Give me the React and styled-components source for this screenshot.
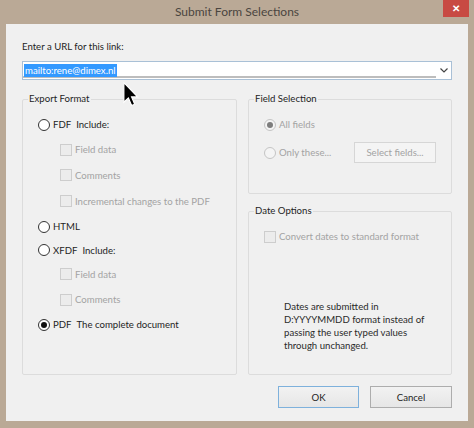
import React from "react";
import styled, { createGlobalStyle } from "styled-components";

const GlobalStyle = createGlobalStyle`
    html, body {
        margin: 0;
        padding: 0;
        box-sizing: border-box;
        background: #baa996;
    }
    *, *::before, *::after {
        box-sizing: border-box;
    }
`;

const Frame = styled.div`
    width: 474px;
    height: 428px;
    display: flex;
    flex-direction: column;
    background: #baa996;
    font-family: "Segoe UI", Lato, "Noto Sans", sans-serif;
    font-size: 9.6px;
    color: #1e1e1e;
    overflow: hidden;
`;

const TitleBar = styled.div`
    height: 24px;
    display: grid;
    grid-template-columns: 1fr auto 1fr;
    align-items: start;
`;

const Title = styled.div`
    grid-column: 2;
    font-size: 12px;
    line-height: 24px;
    color: #4a4540;
`;

const CloseButton = styled.div`
    grid-column: 3;
    justify-self: end;
    margin-right: 5px;
    width: 26px;
    height: 17px;
    background: #c84a43;
    color: #fff;
    font-size: 10px;
    font-weight: bold;
    line-height: 17px;
    text-align: center;
`;

const Client = styled.div`
    position: relative;
    flex: 1;
    margin: 0 6px 7px;
    background: #f0f0f0;
    padding: 15px 16px 0;
    display: flex;
    flex-direction: column;
`;

const UrlLabel = styled.div`
    line-height: 15px;
`;

const Combo = styled.div`
    margin-top: 7px;
    height: 19px;
    display: flex;
    align-items: stretch;
    background: #fff;
    border: 1px solid #a9c0d6;
`;

const ComboField = styled.div`
    flex: 1;
    padding: 2px 1px 0;
    border-bottom: 2px solid #bdbdbd;
    margin-bottom: 1px;
`;

const Selected = styled.span`
    display: inline-block;
    background: #3399ff;
    color: #fff;
    line-height: 13px;
    padding: 0 1px;
`;

const Chevron = styled.div`
    width: 15px;
    display: flex;
    align-items: center;
    justify-content: center;
`;

const Columns = styled.div`
    margin-top: 12px;
    height: 283px;
    display: grid;
    grid-template-columns: 215px minmax(0, 1fr);
    gap: 11px;
`;

const RightColumn = styled.div`
    display: flex;
    flex-direction: column;
    gap: 10px;
    min-width: 0;
`;

const Group = styled.fieldset`
    margin: 0;
    padding: 6px 0 0 15px;
    border: 1px solid #dcdcdc;
    border-radius: 2px;
    min-width: 0;
    height: ${props => props.h};
`;

const Legend = styled.legend`
    margin-left: -10px;
    padding: 0 1px;
    line-height: 14px;
    color: #1e1e1e;
`;

const Row = styled.div`
    height: ${props => props.h || 25}px;
    display: flex;
    align-items: center;
    padding-left: ${props => props.indent || 0}px;
    color: ${props => props.disabled ? "#a3a3a3" : "#1e1e1e"};
    white-space: nowrap;
`;

const Radio = styled.span`
    flex: none;
    width: 12px;
    height: 12px;
    border-radius: 50%;
    border: 1px solid ${props => props.disabled ? "#c4c4c4" : "#333"};
    background: ${props => props.disabled ? "#f4f4f4" : "#fff"};
    margin-right: 3px;
    display: flex;
    align-items: center;
    justify-content: center;

    &::after {
        content: '';
        display: ${props => props.checked ? "block" : "none"};
        width: 6px;
        height: 6px;
        border-radius: 50%;
        background: ${props => props.disabled ? "#7d7d7d" : "#111"};
    }
`;

const Check = styled.span`
    flex: none;
    width: 12px;
    height: 12px;
    border: 1px solid #cdcdcd;
    background: #ececec;
    margin-right: 3px;
`;

const Gap = styled.span`
    display: inline-block;
    width: 5px;
`;

const SmallButton = styled.div`
    margin-left: auto;
    margin-right: 15px;
    width: 82px;
    height: 21px;
    border: 1px solid #d6d6d6;
    background: #f4f4f4;
    color: #a3a3a3;
    display: flex;
    align-items: center;
    justify-content: center;
`;

const Note = styled.div`
    margin-top: 51px;
    padding-left: 20px;
    line-height: 13px;
    color: #2a2a2a;
`;

const ButtonRow = styled.div`
    margin-top: 11px;
    display: flex;
    justify-content: flex-end;
    gap: 11px;
`;

const DialogButton = styled.div`
    width: ${props => props.w}px;
    height: 22px;
    border: 1px solid ${props => props.primary ? "#7eb1dc" : "#adadad"};
    background: linear-gradient(#f2f2f2, #e6e6e6);
    display: flex;
    align-items: center;
    justify-content: center;
    color: #1e1e1e;
`;

const Pointer = styled.svg`
    position: absolute;
    left: 117px;
    top: 58px;
`;

const App = () => {
    return (
        <Frame>
            <GlobalStyle />
            <TitleBar>
                <Title>Submit Form Selections</Title>
                <CloseButton>✕</CloseButton>
            </TitleBar>
            <Client>
                <UrlLabel>Enter a URL for this link:</UrlLabel>
                <Combo>
                    <ComboField>
                        <Selected>mailto:rene@dimex.nl</Selected>
                    </ComboField>
                    <Chevron>
                        <svg width="8" height="5" viewBox="0 0 8 5">
                            <path d="M0.5 0.5 L4 4 L7.5 0.5" fill="none" stroke="#444" strokeWidth="1.2" />
                        </svg>
                    </Chevron>
                </Combo>
                <Columns>
                    <Group h="283px">
                        <Legend>Export Format</Legend>
                        <Row><Radio />FDF<Gap />Include:</Row>
                        <Row indent={22} disabled><Check />Field data</Row>
                        <Row indent={22} disabled h={26}><Check />Comments</Row>
                        <Row indent={22} disabled h={26}><Check />Incremental changes to the PDF</Row>
                        <Row><Radio />HTML</Row>
                        <Row h={22}><Radio />XFDF<Gap />Include:</Row>
                        <Row indent={22} disabled h={26}><Check />Field data</Row>
                        <Row indent={22} disabled><Check />Comments</Row>
                        <Row><Radio checked />PDF<Gap />The complete document</Row>
                    </Group>
                    <RightColumn>
                        <Group h="102px">
                            <Legend>Field Selection</Legend>
                            <Row disabled><Radio disabled checked />All fields</Row>
                            <Row disabled h={31}>
                                <Radio disabled />Only these...
                                <SmallButton>Select fields...</SmallButton>
                            </Row>
                        </Group>
                        <Group h="171px">
                            <Legend>Date Options</Legend>
                            <Row disabled><Check />Convert dates to standard format</Row>
                            <Note>
                                Dates are submitted in<br />
                                D:YYYYMMDD format instead of<br />
                                passing the user typed values<br />
                                through unchanged.
                            </Note>
                        </Group>
                    </RightColumn>
                </Columns>
                <ButtonRow>
                    <DialogButton primary w={81}>OK</DialogButton>
                    <DialogButton w={82}>Cancel</DialogButton>
                </ButtonRow>
                <Pointer width="16" height="25" viewBox="0 0 13 21">
                    <path d="M0.5 0.5 L0.5 17 L4.3 13.4 L7 19.8 L9.6 18.7 L7 12.5 L12 12.5 Z" fill="#000" stroke="#fff" strokeWidth="1" />
                </Pointer>
            </Client>
        </Frame>
    );
};

export default App;
